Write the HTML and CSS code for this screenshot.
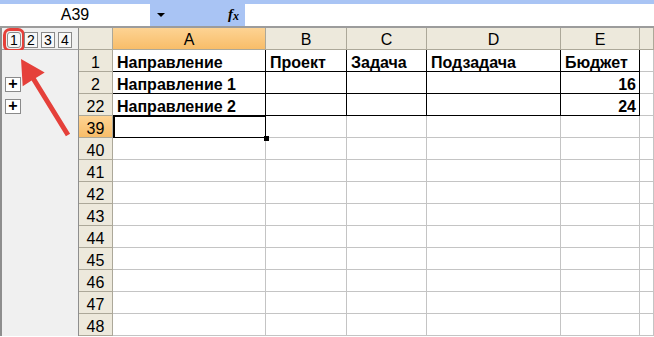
FILE: index.html
```html
<!DOCTYPE html>
<html lang="ru">
<head>
    <meta charset="UTF-8">
    <title>Группировка строк</title>
    <link rel="stylesheet" href="styles.css">
</head>
<body>
    <div class="window">
        <div class="formula-bar">
            <div class="name-box">A39</div>
            <div class="name-drop">
                <span class="drop-arrow"></span>
                <span class="fx">f<span class="fx-x">x</span></span>
            </div>
            <div class="formula-input"></div>
        </div>

        <div class="sheet">
            <!-- header row -->
            <div class="outline outline-levels">
                <span class="level-btn active">1</span>
                <span class="level-btn">2</span>
                <span class="level-btn">3</span>
                <span class="level-btn">4</span>
            </div>
            <div class="hdr corner"></div>
            <div class="hdr col sel">A</div>
            <div class="hdr col">B</div>
            <div class="hdr col">C</div>
            <div class="hdr col">D</div>
            <div class="hdr col">E</div>
            <div class="hdr col"></div>

            <!-- row 1 -->
            <div class="outline"></div>
            <div class="hdr rownum">1</div>
            <div class="cell boxed">Направление</div>
            <div class="cell boxed">Проект</div>
            <div class="cell boxed">Задача</div>
            <div class="cell boxed">Подзадача</div>
            <div class="cell boxed">Бюджет</div>
            <div class="cell"></div>

            <!-- row 2 -->
            <div class="outline"><span class="plus">+</span></div>
            <div class="hdr rownum">2</div>
            <div class="cell boxed">Направление 1</div>
            <div class="cell boxed"></div>
            <div class="cell boxed"></div>
            <div class="cell boxed"></div>
            <div class="cell boxed num">16</div>
            <div class="cell"></div>

            <!-- row 22 -->
            <div class="outline"><span class="plus">+</span></div>
            <div class="hdr rownum">22</div>
            <div class="cell boxed">Направление 2</div>
            <div class="cell boxed"></div>
            <div class="cell boxed"></div>
            <div class="cell boxed"></div>
            <div class="cell boxed num">24</div>
            <div class="cell"></div>

            <!-- row 39 (active) -->
            <div class="outline"></div>
            <div class="hdr rownum sel">39</div>
            <div class="cell active-cell"></div>
            <div class="cell"></div>
            <div class="cell"></div>
            <div class="cell"></div>
            <div class="cell"></div>
            <div class="cell"></div>

            <div class="outline"></div><div class="hdr rownum">40</div>
            <div class="cell"></div><div class="cell"></div><div class="cell"></div><div class="cell"></div><div class="cell"></div><div class="cell"></div>

            <div class="outline"></div><div class="hdr rownum">41</div>
            <div class="cell"></div><div class="cell"></div><div class="cell"></div><div class="cell"></div><div class="cell"></div><div class="cell"></div>

            <div class="outline"></div><div class="hdr rownum">42</div>
            <div class="cell"></div><div class="cell"></div><div class="cell"></div><div class="cell"></div><div class="cell"></div><div class="cell"></div>

            <div class="outline"></div><div class="hdr rownum">43</div>
            <div class="cell"></div><div class="cell"></div><div class="cell"></div><div class="cell"></div><div class="cell"></div><div class="cell"></div>

            <div class="outline"></div><div class="hdr rownum">44</div>
            <div class="cell"></div><div class="cell"></div><div class="cell"></div><div class="cell"></div><div class="cell"></div><div class="cell"></div>

            <div class="outline"></div><div class="hdr rownum">45</div>
            <div class="cell"></div><div class="cell"></div><div class="cell"></div><div class="cell"></div><div class="cell"></div><div class="cell"></div>

            <div class="outline"></div><div class="hdr rownum">46</div>
            <div class="cell"></div><div class="cell"></div><div class="cell"></div><div class="cell"></div><div class="cell"></div><div class="cell"></div>

            <div class="outline"></div><div class="hdr rownum">47</div>
            <div class="cell"></div><div class="cell"></div><div class="cell"></div><div class="cell"></div><div class="cell"></div><div class="cell"></div>

            <div class="outline"></div><div class="hdr rownum">48</div>
            <div class="cell"></div><div class="cell"></div><div class="cell"></div><div class="cell"></div><div class="cell"></div><div class="cell"></div>
        </div>

        <!-- annotation arrow pointing at level button 1 -->
        <svg class="callout" width="100" height="140" viewBox="0 0 100 140">
            <polygon points="21,55 44.7,68.4 35.8,74 70.1,129.7 65.9,132.3 31.6,76.6 22.7,82.2" fill="#e5403a"/>
        </svg>
    </div>
</body>
</html>
```

FILE: styles.css
```css
* {
    margin: 0;
    padding: 0;
    box-sizing: border-box;
}

body {
    font-family: "Liberation Sans", Arial, sans-serif;
    font-size: 16px;
    color: #000;
    background: #fff;
    overflow: hidden;
}

.window {
    position: relative;
    width: 654px;
    height: 337px;
    overflow: hidden;
    border-top: 4px solid #a9c4f4;
}

/* Formula bar */
.formula-bar {
    display: flex;
    height: 24px;
    border-bottom: 2px solid #9c9c9c;
}

.name-box {
    width: 150px;
    text-align: center;
    line-height: 22px;
    background: #fff;
}

.name-drop {
    width: 95px;
    background: #a9c4f4;
    display: flex;
    align-items: center;
    justify-content: space-between;
    padding: 0 6px 0 7px;
}

.drop-arrow {
    width: 0;
    height: 0;
    border-left: 4px solid transparent;
    border-right: 4px solid transparent;
    border-top: 4px solid #000;
}

.fx {
    font-family: "Liberation Serif", serif;
    font-style: italic;
    font-weight: bold;
    font-size: 15px;
    line-height: 15px;
}

.fx-x {
    font-size: 12px;
    position: relative;
    top: 1px;
}

.formula-input {
    flex: 1;
    background: #fff;
}

/* Sheet grid */
.sheet {
    display: grid;
    grid-template-columns: 77px 34px 153px 81px 80px 134px 79px 1fr;
    grid-auto-rows: 22px;
    border-left: 2px solid #8e8e8e;
}

.outline {
    background: #f0f0f0;
    border-right: 1px solid #8e8e8e;
}

.outline-levels {
    display: flex;
    gap: 3px;
    padding: 4px 0 0 5px;
    border-bottom: 1px solid #a0a0a0;
}

.level-btn {
    width: 14px;
    height: 16px;
    border: 1px solid #8a8a8a;
    background: #f8f8f8;
    font-size: 14px;
    line-height: 14px;
    text-align: center;
}

.level-btn.active {
    border-radius: 3px;
    outline: 3px solid #e5403a;
    outline-offset: 1px;
}

.plus {
    display: block;
    width: 16px;
    height: 15px;
    margin: 5px 0 0 3px;
    border: 1px solid #8a8a8a;
    background: #fff;
    font-weight: bold;
    font-size: 16px;
    line-height: 12px;
    text-align: center;
}

.hdr {
    background: #ede9dc;
    border-right: 1px solid #aca899;
    border-bottom: 1px solid #aca899;
    text-align: center;
    line-height: 17px;
}

.hdr.col {
    padding-top: 3px;
}

.hdr.rownum {
    padding-top: 4px;
}

.hdr.sel {
    background: linear-gradient(#fdd393, #f8bd69);
}

.cell {
    position: relative;
    background: #fff;
    border-right: 1px solid #c4c4c4;
    border-bottom: 1px solid #c4c4c4;
    padding: 4px 3px 0 4px;
    line-height: 17px;
    font-weight: bold;
    white-space: nowrap;
}

.cell.boxed {
    border-color: #000;
}

.cell.num {
    text-align: right;
}

/* active cell frame + fill handle */
.active-cell::after {
    content: "";
    position: absolute;
    left: 0;
    top: -1px;
    right: -2px;
    bottom: -2px;
    border: 2px solid #000;
}

.active-cell::before {
    content: "";
    position: absolute;
    right: -4px;
    bottom: -4px;
    width: 5px;
    height: 5px;
    background: #000;
    z-index: 1;
}

.callout {
    position: absolute;
    left: 0;
    top: 0;
    pointer-events: none;
}
```
